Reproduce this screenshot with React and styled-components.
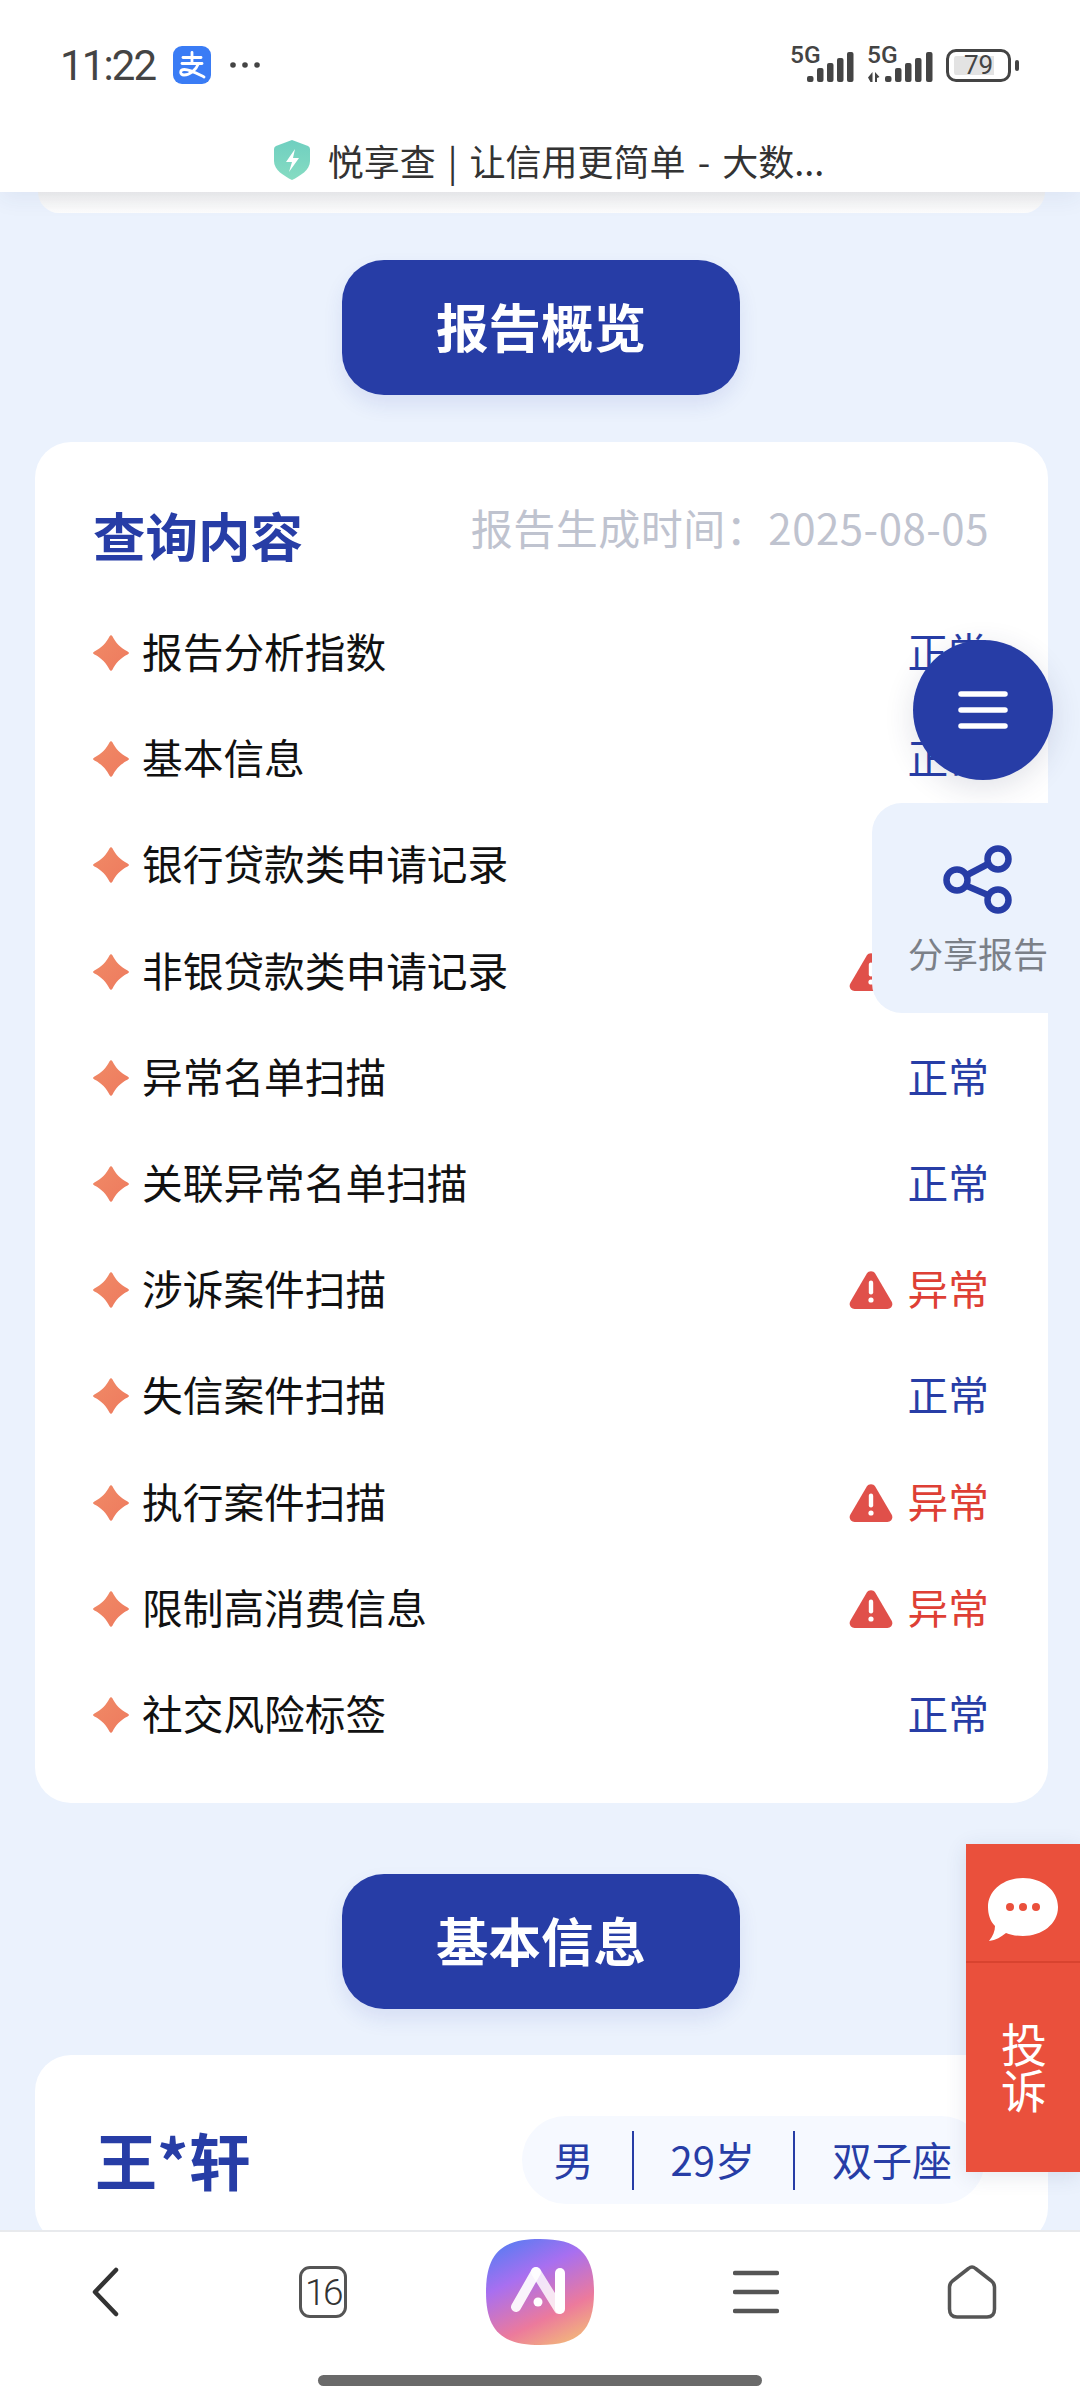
import React from "react";
import styled, { createGlobalStyle } from "styled-components";

const CJK = `"Noto Sans CJK SC", "Noto Sans", sans-serif`;
const BLUE = "#273da6";
const PAGE = "#ebf2fd";

const Global = createGlobalStyle`
  html, body { margin: 0; padding: 0; background: ${PAGE}; }
  * { box-sizing: border-box; }
`;

const Screen = styled.div`
  position: relative;
  width: 1080px;
  height: 2403px;
  display: flex;
  flex-direction: column;
  overflow: hidden;
  background: ${PAGE};
  font-family: ${CJK};
`;

/* ---------- top chrome ---------- */
const Chrome = styled.header`
  position: relative;
  z-index: 2;
  flex: 0 0 192px;
  background: #fff;
  box-shadow: 0 6px 22px rgba(40, 60, 110, 0.07);
`;
const StatusBar = styled.div`
  height: 130px;
  padding: 0 61px 0 60px;
  display: flex;
  align-items: center;
  justify-content: space-between;
`;
const StatusLeft = styled.div`
  display: flex;
  align-items: center;
`;
const Clock = styled.span`
  font-family: Roboto, sans-serif;
  font-size: 42px;
  font-weight: 400;
  letter-spacing: -1.9px;
  color: #444;
  width: 113px;
`;
const StatusRight = styled.div`
  display: flex;
  align-items: center;
`;
const SignalGap = styled.span`
  width: 11px;
`;
const Battery = styled.div`
  width: 65px;
  height: 33px;
  margin-left: 13px;
  padding: 4px 5px;
  border: 3.5px solid #444;
  border-radius: 10px;
  font: 400 26px/18px Roboto, sans-serif;
  color: #444;
  text-align: center;
  background: linear-gradient(90deg, #e3e3e3 0 82%, transparent 82%) content-box;
`;
const BatteryNub = styled.div`
  width: 4px;
  height: 11px;
  margin-left: 4px;
  border-radius: 2px;
  background: #444;
`;
const TitleBar = styled.div`
  height: 62px;
  padding: 0 0 2px 18px;
  display: flex;
  align-items: center;
  justify-content: center;
  gap: 18px;
  font-size: 36px;
  word-spacing: 4px;
  line-height: 1;
  color: #333;
`;

/* ---------- page ---------- */
const Scroll = styled.main`
  flex: 1;
  min-height: 0;
  overflow: hidden;
  display: flex;
  flex-direction: column;
  align-items: center;
`;
const PrevCardEnd = styled.div`
  flex: none;
  width: 1007px;
  height: 21px;
  margin-left: 3px;
  background: linear-gradient(#efefef, #fdfdfd);
  border-radius: 0 0 30px 30px;
`;
const SectionButton = styled.div`
  flex: none;
  width: 398px;
  height: 135px;
  margin: ${(p) => p.$top}px 0 0 2px;
  padding-bottom: 6px;
  display: flex;
  align-items: center;
  justify-content: center;
  background: ${BLUE};
  border-radius: 42px;
  box-shadow: 0 10px 20px rgba(39, 61, 166, 0.1);
  color: #fff;
  font-size: 52.5px;
  font-weight: 700;
`;
const Card = styled.section`
  flex: none;
  width: 1013px;
  margin: ${(p) => p.$top}px 32px 0 35px;
  padding: ${(p) => p.$pad};
  background: #fff;
  border-radius: 36px;
`;
const CardHead = styled.div`
  height: 158px;
  padding-top: 58px;
  display: flex;
  align-items: flex-start;
  justify-content: space-between;
`;
const CardTitle = styled.h2`
  margin: 0;
  font-size: 52.5px;
  line-height: 68px;
  font-weight: 700;
  color: ${BLUE};
`;
const DateText = styled.span`
  font-size: 42px;
  line-height: 54px;
  letter-spacing: 0.5px;
  color: #bfc3cf;
`;
const Row = styled.div`
  height: 106.2px;
  display: flex;
  align-items: center;
  font-size: 40.7px;
  color: #111;
`;
const RowLabel = styled.span`
  margin-left: 13px;
  padding-bottom: 5px;
  flex: 1;
`;
const Status = styled.span`
  display: flex;
  align-items: center;
  gap: 15px;
  color: ${(p) => (p.$bad ? "#de3f35" : BLUE)};
`;
const StatusText = styled.span`
  padding-bottom: 5px;
`;

const PersonHead = styled.div`
  display: flex;
  align-items: center;
  justify-content: space-between;
`;
const PersonName = styled.h2`
  margin: -3px 0 0 -3px;
  font-size: 62px;
  line-height: 88px;
  font-weight: 700;
  color: ${BLUE};
`;
const Chips = styled.div`
  height: 88px;
  padding: 0 33px 0 32px;
  display: flex;
  align-items: center;
  border-radius: 44px;
  background: #f6f9ff;
  font-size: 40px;
  color: ${BLUE};
`;
const ChipText = styled.span`
  padding-bottom: 3px;
`;
const ChipDivider = styled.i`
  width: 2px;
  height: 59px;
  margin: 0 37px 0 38px;
  background: ${BLUE};
`;

/* ---------- floating ---------- */
const MenuFab = styled.div`
  position: absolute;
  z-index: 1;
  left: 913px;
  top: 640px;
  width: 140px;
  height: 140px;
  display: flex;
  align-items: center;
  justify-content: center;
  border-radius: 50%;
  background: ${BLUE};
  box-shadow: 0 8px 30px rgba(40, 50, 90, 0.14);
`;
const SharePanel = styled.div`
  position: absolute;
  z-index: 1;
  right: 0;
  top: 803px;
  width: 208px;
  height: 210px;
  padding: 42px 0 0 4px;
  display: flex;
  flex-direction: column;
  align-items: center;
  gap: 13px;
  background: ${PAGE};
  border-radius: 30px 0 0 30px;
  font-size: 35px;
  line-height: 50px;
  color: #7b8088;
`;
const Complaint = styled.aside`
  position: absolute;
  z-index: 1;
  right: 0;
  top: 1844px;
  width: 114px;
  height: 328px;
  display: flex;
  flex-direction: column;
  background: #ea503c;
  box-shadow: 0 4px 20px rgba(40, 60, 110, 0.12);
  color: #fff;
`;
const ComplaintChat = styled.div`
  flex: 0 0 119px;
  padding-top: 14px;
  display: flex;
  align-items: center;
  justify-content: center;
  border-bottom: 2px solid #d8432f;
`;
const ComplaintText = styled.div`
  flex: 1;
  padding: 0 0 6px 2px;
  display: flex;
  align-items: center;
  justify-content: center;
  width: 48px;
  margin: 0 auto;
  font-size: 46px;
  line-height: 46px;
  text-align: center;
`;

/* ---------- bottom nav ---------- */
const BottomNav = styled.nav`
  position: relative;
  z-index: 2;
  flex: 0 0 173px;
  background: #fff;
  border-top: 2px solid #e8eaed;
`;
const NavRow = styled.div`
  height: 120px;
  display: grid;
  grid-template-columns: repeat(5, 1fr);
  align-items: center;
  justify-items: center;
`;
const TabCount = styled.div`
  width: 48px;
  height: 52px;
  margin-right: 2px;
  display: flex;
  align-items: center;
  justify-content: center;
  border: 3.5px solid #555;
  border-radius: 11px;
  font: 300 37px/1 Roboto, sans-serif;
  letter-spacing: -2.5px;
  color: #333;
`;
const HomeBar = styled.div`
  width: 444px;
  height: 11px;
  margin: 23px auto 0;
  border-radius: 6px;
  background: #6a6a6a;
`;
const BackSlot = styled.div`
  margin-right: 6px;
  display: flex;
`;

/* ---------- drawings ---------- */
const Star = () => (
  <svg width="36" height="36" viewBox="0 0 36 36">
    <defs>
      <linearGradient id="st" x1="0" y1="0" x2="1" y2="1">
        <stop offset="0" stopColor="#f08a66" />
        <stop offset="1" stopColor="#ee7a5e" />
      </linearGradient>
    </defs>
    <path
      d="M16.6 1.2 C17.2 0 18.8 0 19.4 1.2 C22.5 7.5 27.5 13 34.6 16.4 C36.4 17.2 36.4 18.8 34.6 19.6 C27.5 23 22.5 28.5 19.4 34.8 C18.8 36 17.2 36 16.6 34.8 C13.5 28.5 8.5 23 1.4 19.6 C-0.4 18.8 -0.4 17.2 1.4 16.4 C8.5 13 13.5 7.5 16.6 1.2Z"
      fill="url(#st)"
    />
  </svg>
);

const Warn = () => (
  <svg width="44" height="38" viewBox="0 0 44 38">
    <path
      d="M17.8 2.6 C19.6 -0.4 24.4 -0.4 26.2 2.6 L42.6 30.4 C44.6 33.8 42.4 38 38.4 38 L5.6 38 C1.6 38 -0.6 33.8 1.4 30.4Z"
      fill="#e0504a"
    />
    <rect x="19.8" y="9.5" width="4.4" height="14" rx="2.2" fill="#fff" />
    <circle cx="22" cy="29" r="2.6" fill="#fff" />
  </svg>
);

const AlipayIcon = () => (
  <svg width="38" height="38" viewBox="0 0 38 38">
    <rect width="38" height="38" rx="9" fill="#3a7cf5" />
    <g fill="none" stroke="#fff" strokeWidth="2.8" strokeLinecap="round">
      <path d="M10 11.5 H28" />
      <path d="M19 6.5 V17" />
      <path d="M9 17.5 H29" />
      <path d="M25.5 17.5 C23 24 17 29 11 29 C6.5 29 6.5 23.5 11.5 23.5 C17 23.5 24 27.5 31 31" />
    </g>
  </svg>
);

const MoreDots = () => (
  <svg width="30" height="8" viewBox="0 0 30 8" style={{ marginLeft: 19 }}>
    <g fill="#444">
      <circle cx="3" cy="4" r="2.8" />
      <circle cx="15" cy="4" r="2.8" />
      <circle cx="27" cy="4" r="2.8" />
    </g>
  </svg>
);

const Signal = ({ width, bars, arrows, textX }) => {
  const tops = [36, 28, 23, 18, 12];
  return (
    <svg width={width} height="50" viewBox={`0 0 ${width} 50`}>
      <text x={textX} y="23" fontFamily="Roboto, sans-serif" fontSize="24.5" fontWeight="500" fill="#444">
        5G
      </text>
      {bars.map((x, i) => (
        <rect key={x} x={x} y={tops[i]} width="6.5" height={42 - tops[i]} rx="2" fill="#444" />
      ))}
      {arrows && <path d="M1 37.5 L5.5 32 V42 H3.5 Z M8 32 L12.5 37 L10 38 V42 H8 Z" fill="#444" />}
    </svg>
  );
};

const ShieldIcon = () => (
  <svg width="36" height="40" viewBox="0 0 36 40">
    <defs>
      <linearGradient id="sh" x1="0" y1="0" x2="0" y2="1">
        <stop offset="0" stopColor="#6fcfc0" />
        <stop offset="1" stopColor="#86dcc2" />
      </linearGradient>
    </defs>
    <path d="M18 0 L34 6 Q36 7 36 9 V21 C36 30 26 36 18 40 C10 36 0 30 0 21 V9 Q0 7 2 6Z" fill="url(#sh)" />
    <path d="M21 9 L12 22 H18 L15 32 L25 18 H19Z" fill="#fff" />
  </svg>
);

const MenuIcon = () => (
  <svg width="50" height="38" viewBox="0 0 50 38">
    <g fill="none" stroke="#fff" strokeWidth="5.5" strokeLinecap="round">
      <path d="M3 3 H47" />
      <path d="M3 19 H47" />
      <path d="M3 35 H47" />
    </g>
  </svg>
);

const ShareIcon = () => (
  <svg width="70" height="70" viewBox="0 0 70 70">
    <g fill="none" stroke={BLUE} strokeWidth="6.5">
      <circle cx="55" cy="14" r="10.5" />
      <circle cx="14" cy="35" r="10.5" />
      <circle cx="55" cy="55" r="10.5" />
      <path d="M24 30 L45 19" />
      <path d="M24 41 L45 50" />
    </g>
  </svg>
);

const ChatIcon = () => (
  <svg width="72" height="66" viewBox="0 0 72 66">
    <path
      d="M36 1 C55 1 71 13 71 30 C71 47 55 59 36 59 C29 59 24 58 19 56 C14 60 9 63 2 64 C6 59 8 54 8 49 C3 44 1 37 1 30 C1 13 17 1 36 1Z"
      fill="#fff"
    />
    <g fill="#ea503c">
      <circle cx="23" cy="30" r="4" />
      <circle cx="36" cy="30" r="4" />
      <circle cx="49" cy="30" r="4" />
    </g>
  </svg>
);

const BackIcon = () => (
  <svg width="30" height="50" viewBox="0 0 30 50">
    <path d="M26 3 L5 25 L26 47" fill="none" stroke="#333" strokeWidth="4.5" strokeLinecap="round" strokeLinejoin="round" />
  </svg>
);

const BrandLogo = () => (
  <svg width="108" height="106" viewBox="0 0 108 106">
    <defs>
      <linearGradient id="lg" x1="0.25" y1="0" x2="0.75" y2="1">
        <stop offset="0" stopColor="#5f7bf2" />
        <stop offset="0.32" stopColor="#a86ff0" />
        <stop offset="0.72" stopColor="#ec7a9c" />
        <stop offset="1" stopColor="#f2b57c" />
      </linearGradient>
    </defs>
    <path d="M54 0 C92 0 108 14 108 53 C108 92 92 106 54 106 C16 106 0 92 0 53 C0 14 16 0 54 0Z" fill="url(#lg)" />
    <g fill="none" strokeWidth="10" strokeLinecap="round">
      <path d="M74 34 V70" stroke="#fff" />
      <path d="M50 33 L73 70" stroke="#fff" strokeOpacity="0.82" />
      <path d="M50 33 L30 68" stroke="#fff" strokeOpacity="0.92" />
    </g>
    <circle cx="52" cy="63" r="4.5" fill="#fff" />
  </svg>
);

const ListIcon = () => (
  <svg width="46" height="46" viewBox="0 0 46 46">
    <g fill="none" stroke="#555" strokeWidth="4.5" strokeLinecap="round">
      <path d="M2 4 H44" />
      <path d="M2 23 H44" />
      <path d="M2 42 H44" />
    </g>
  </svg>
);

const HomeIcon = () => (
  <svg width="50" height="54" viewBox="0 0 50 54">
    <path
      d="M21.5 3.5 Q25 0.5 28.5 3.5 L44.5 16 Q47.5 18.5 47.5 22 V44 Q47.5 52 40 52 H10 Q2.5 52 2.5 44 V22 Q2.5 18.5 5.5 16Z"
      fill="none"
      stroke="#555"
      strokeWidth="3.5"
      strokeLinejoin="round"
    />
  </svg>
);

const ROWS = [
  ["报告分析指数", false],
  ["基本信息", false],
  ["银行贷款类申请记录", false],
  ["非银贷款类申请记录", true],
  ["异常名单扫描", false],
  ["关联异常名单扫描", false],
  ["涉诉案件扫描", true],
  ["失信案件扫描", false],
  ["执行案件扫描", true],
  ["限制高消费信息", true],
  ["社交风险标签", false],
];

export default function App() {
  return (
    <Screen>
      <Global />
      <Chrome>
        <StatusBar>
          <StatusLeft>
            <Clock>11:22</Clock>
            <AlipayIcon />
            <MoreDots />
          </StatusLeft>
          <StatusRight>
            <Signal width={66} textX={0} bars={[17, 27, 37, 47, 57]} />
            <SignalGap />
            <Signal width={66} textX={0} arrows bars={[18, 28, 38, 48, 59]} />
            <Battery>79</Battery>
            <BatteryNub />
          </StatusRight>
        </StatusBar>
        <TitleBar>
          <ShieldIcon />
          <span>悦享查 | 让信用更简单 - 大数...</span>
        </TitleBar>
      </Chrome>

      <Scroll>
        <PrevCardEnd />
        <SectionButton $top={47}>报告概览</SectionButton>
        <Card $top={47} $pad="0 59px 35px 58px">
          <CardHead>
            <CardTitle>查询内容</CardTitle>
            <DateText>报告生成时间：2025-08-05</DateText>
          </CardHead>
          {ROWS.map(([label, bad]) => (
            <Row key={label}>
              <Star />
              <RowLabel>{label}</RowLabel>
              <Status $bad={bad}>
                {bad && <Warn />}
                <StatusText>{bad ? "异常" : "正常"}</StatusText>
              </Status>
            </Row>
          ))}
        </Card>
        <SectionButton $top={71}>基本信息</SectionButton>
        <Card $top={46} $pad="61px 63px 40px 63px">
          <PersonHead>
            <PersonName>王*轩</PersonName>
            <Chips>
              <ChipText>男</ChipText>
              <ChipDivider />
              <ChipText>29岁</ChipText>
              <ChipDivider />
              <ChipText>双子座</ChipText>
            </Chips>
          </PersonHead>
        </Card>
      </Scroll>

      <MenuFab>
        <MenuIcon />
      </MenuFab>
      <SharePanel>
        <ShareIcon />
        <span>分享报告</span>
      </SharePanel>
      <Complaint>
        <ComplaintChat>
          <ChatIcon />
        </ComplaintChat>
        <ComplaintText>投诉</ComplaintText>
      </Complaint>

      <BottomNav>
        <NavRow>
          <BackSlot>
            <BackIcon />
          </BackSlot>
          <TabCount>16</TabCount>
          <BrandLogo />
          <ListIcon />
          <HomeIcon />
        </NavRow>
        <HomeBar />
      </BottomNav>
    </Screen>
  );
}
